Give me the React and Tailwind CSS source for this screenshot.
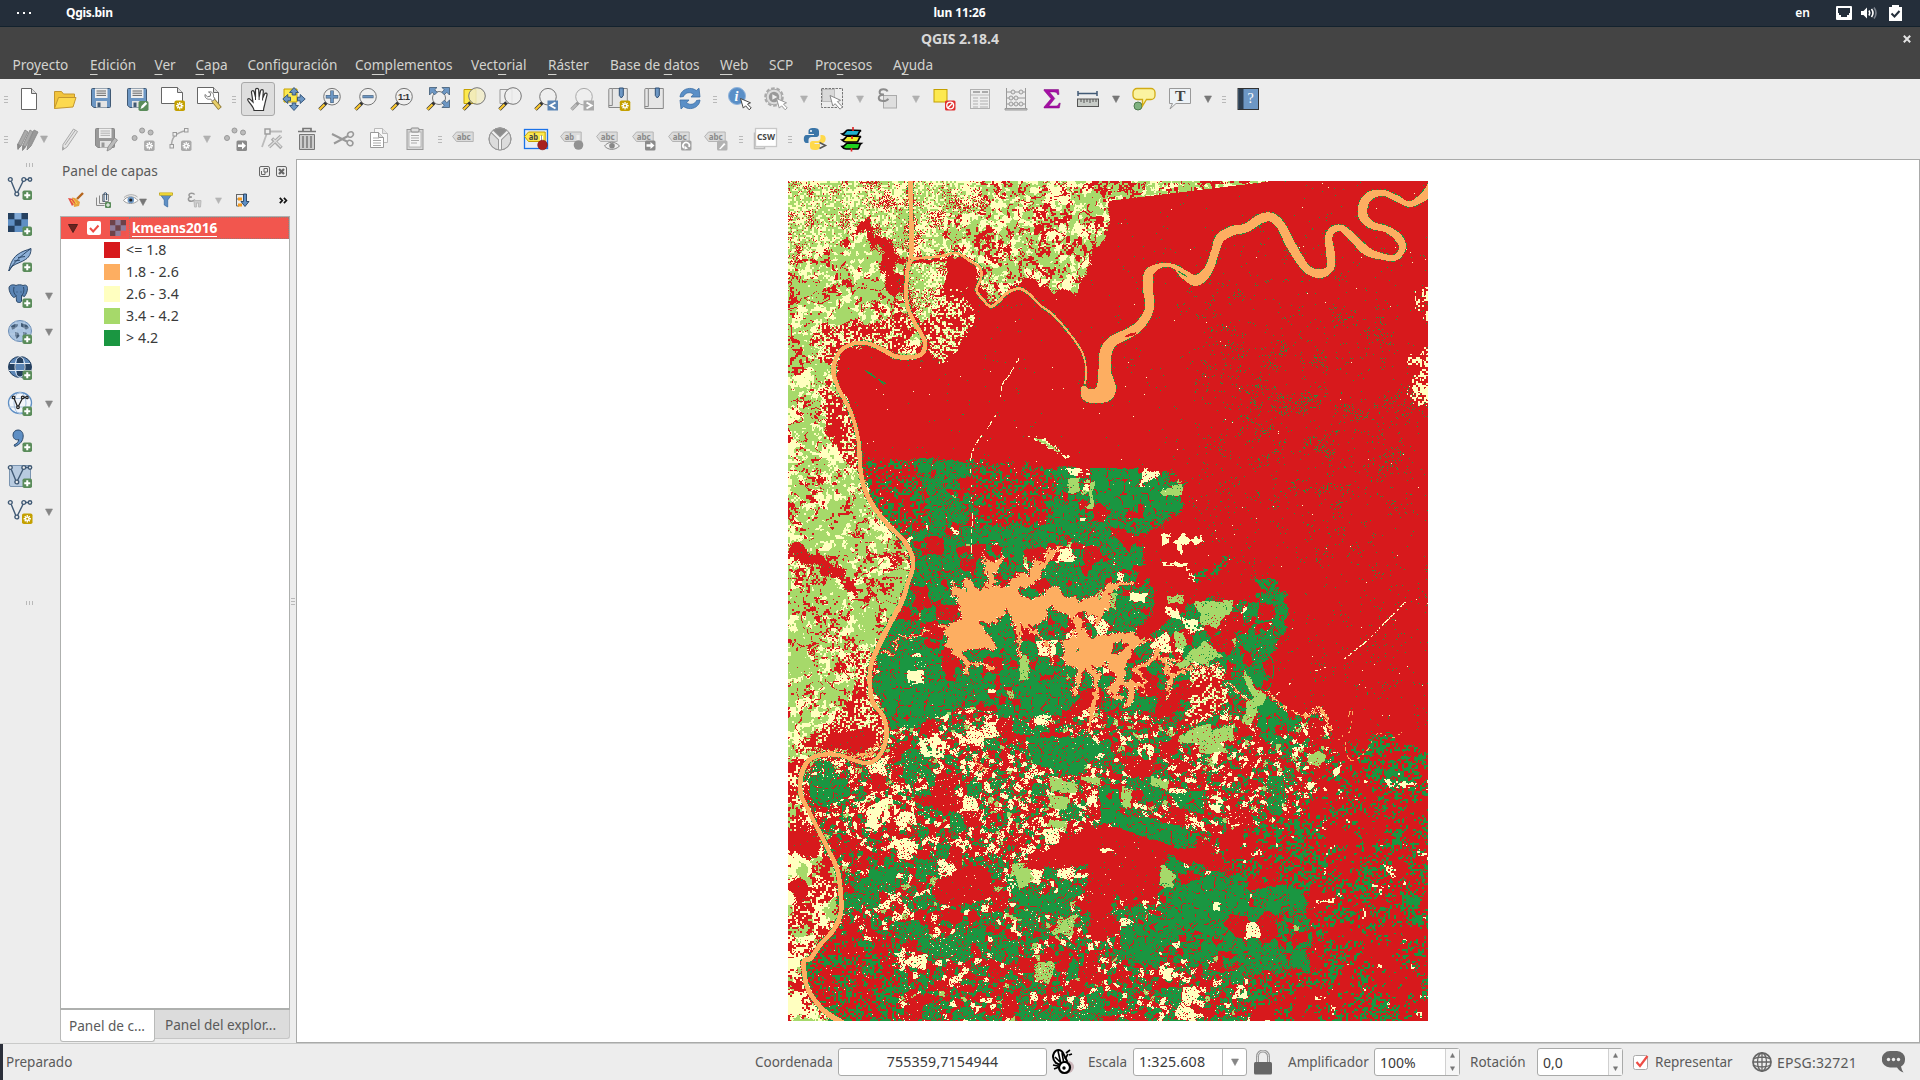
import React, { useEffect, useRef } from "react";

/* ---------------------------------------------------------------- raster */

const W = 640;
const H = 840;
const CLASSES = [
  [215, 25, 28],
  [253, 174, 97],
  [255, 255, 192],
  [166, 217, 106],
  [26, 150, 65],
];
const [RED, ORANGE, YELLOW, LIME, GREEN] = [0, 1, 2, 3, 4];

function hash(x, y, s) {
  let h = Math.imul(x | 0, 374761393) ^ Math.imul(y | 0, 668265263) ^ Math.imul(s | 0, 2147483629);
  h = Math.imul(h ^ (h >>> 13), 1274126177);
  h = Math.imul(h ^ (h >>> 15), 2246822519);
  return ((h ^ (h >>> 16)) >>> 0) / 4294967296;
}

function noise(x, y, scale, s) {
  const fx = x / scale;
  const fy = y / scale;
  const ix = Math.floor(fx);
  const iy = Math.floor(fy);
  let u = fx - ix;
  let v = fy - iy;
  u = u * u * (3 - 2 * u);
  v = v * v * (3 - 2 * v);
  const a = hash(ix, iy, s);
  const b = hash(ix + 1, iy, s);
  const c = hash(ix, iy + 1, s);
  const d = hash(ix + 1, iy + 1, s);
  return (a * (1 - u) + b * u) * (1 - v) + (c * (1 - u) + d * u) * v;
}

/* Jittered parcels; returns a per-parcel seed and the distance to the parcel's edge. */
function parcel(x, y, size, angle, s) {
  const ca = Math.cos(angle);
  const sa = Math.sin(angle);
  const u = (x * ca + y * sa) / size;
  const v = (y * ca - x * sa) / size;
  const iu = Math.floor(u);
  const iv = Math.floor(v);
  let best = 9;
  let second = 9;
  let id = 0;
  for (let j = -1; j <= 1; j++) {
    for (let i = -1; i <= 1; i++) {
      const px = iu + i + 0.1 + 0.8 * hash(iu + i, iv + j, s);
      const py = iv + j + 0.1 + 0.8 * hash(iu + i, iv + j, s + 1);
      const d = Math.max(Math.abs(u - px), Math.abs(v - py));
      if (d < best) {
        second = best;
        best = d;
        id = (iu + i) * 7919 + (iv + j) * 104729;
      } else if (d < second) second = d;
    }
  }
  return [id, (second - best) * size];
}

/* Shapes are digitised at three units per raster cell, from a (24, 18) origin. */
function pts(text, dx = 0, dy = 0) {
  return text
    .trim()
    .split(/\s+/)
    .map((p) => {
      const [x, y, w] = p.split(",").map(Number);
      return [(x + dx - 24) / 3, (y + dy - 18) / 3, (w || 0) / 3];
    });
}
const nw = (t) => pts(t);
const ne = (t) => pts(t, 960, 0);
const sw = (t) => pts(t, 0, 1275);
const se = (t) => pts(t, 960, 1275);

function fill(grid, poly, value) {
  for (let y = 0; y < H; y++) {
    const cy = y + 0.5;
    const xs = [];
    for (let i = 0; i < poly.length; i++) {
      const a = poly[i];
      const b = poly[(i + 1) % poly.length];
      if (a[1] <= cy !== b[1] <= cy) xs.push(a[0] + ((cy - a[1]) / (b[1] - a[1])) * (b[0] - a[0]));
    }
    xs.sort((p, q) => p - q);
    for (let k = 0; k + 1 < xs.length; k += 2) {
      const from = Math.max(0, Math.ceil(xs[k] - 0.5));
      const to = Math.min(W - 1, Math.floor(xs[k + 1] - 0.5));
      for (let x = from; x <= to; x++) grid[y * W + x] = value;
    }
  }
}

function stamp(grid, cx, cy, r, paint) {
  for (let y = Math.max(0, Math.floor(cy - r)); y <= Math.min(H - 1, Math.ceil(cy + r)); y++)
    for (let x = Math.max(0, Math.floor(cx - r)); x <= Math.min(W - 1, Math.ceil(cx + r)); x++)
      if ((x + 0.5 - cx) ** 2 + (y + 0.5 - cy) ** 2 <= r * r) paint(y * W + x, x, y);
}

function along(line, visit) {
  for (let i = 0; i < line.length - 1; i++) {
    const p0 = line[Math.max(0, i - 1)];
    const p1 = line[i];
    const p2 = line[i + 1];
    const p3 = line[Math.min(line.length - 1, i + 2)];
    const n = Math.ceil(Math.hypot(p2[0] - p1[0], p2[1] - p1[1]) * 2) + 1;
    for (let k = 0; k <= n; k++) {
      const t = k / n;
      const at = (c) =>
        0.5 *
        (2 * p1[c] +
          (p2[c] - p0[c]) * t +
          (2 * p0[c] - 5 * p1[c] + 4 * p2[c] - p3[c]) * t * t +
          (3 * p1[c] - p0[c] - 3 * p2[c] + p3[c]) * t * t * t);
      visit(at(0), at(1), at(2) / 2);
    }
  }
}

function river(grid, line, bank) {
  if (bank > 0)
    along(line, (x, y, r) =>
      stamp(grid, x, y, r + 1, (i, px, py) => {
        if (hash(px, py, 91) < bank) grid[i] = GREEN;
      })
    );
  along(line, (x, y, r) => stamp(grid, x, y, Math.max(r, 0.6), (i) => (grid[i] = ORANGE)));
}

const PALE = 1;
const PASTURE = 2;
const SPECKLE = 3;
const BARE = 4;
const NORTH_FARM = 5;
const MIXED_FARM = 6;
const SOUTH_FARM = 7;
const GREEN_FARM = 8;
const EAST_FRINGE = 9;
const THICKET = 10;
const NORTH_PASTURE = 11;
const YELLOW_MIX = 12;
const EAST_FARM = 13;

const ZONES = [
  [PASTURE, nw("0,0 390,0 395,240 380,300 380,370 392,420 432,500 405,545 350,545 270,507 190,520 160,590 225,750 240,870 275,985 370,1095 398,1180 360,1290 290,1425 270,1530 310,1620 320,1675 285,1755 130,1739 62,1800 62,1855 115,1965 172,2085 182,2215 70,2355 80,2445 180,2540 0,2540")],
  [PALE, nw("0,0 390,0 392,225 350,215 285,150 240,150 150,215 90,215 40,260 0,250")],
  [NORTH_PASTURE, nw("398,0 990,0 1530,12 985,78 985,180 945,215 930,270 885,350 820,345 780,330 740,300 690,340 650,372 625,370 605,330 605,280 540,235 400,245")],
  [PALE, nw("398,0 600,0 620,80 560,120 500,120 470,200 400,235")],
  [PALE, nw("400,262 505,258 510,300 470,340 450,430 415,430 388,380 386,300")],
  [SPECKLE, nw("470,330 545,335 560,380 590,420 555,490 485,572 440,500 415,440 450,420")],
  [SPECKLE, nw("120,450 300,450 360,400 400,470 350,540 270,505 190,520 160,570 110,560 100,500")],
  [SPECKLE, nw("120,640 175,660 225,750 240,880 230,900 190,850 140,780")],
  [BARE, nw("235,145 275,122 288,172 340,215 350,280 378,312 375,380 335,345 310,300 300,240 240,175")],
  [BARE, nw("30,1110 60,1098 115,1150 200,1190 205,1220 235,1240 230,1275 190,1250 195,1232 120,1185 90,1175 40,1150")],
  [SPECKLE, sw("200,130 285,150 268,260 310,350 318,430 285,455 120,440 60,460 40,440 130,380 190,340 230,250")],
  [BARE, sw("150,400 270,390 290,440 230,465 130,445")],
  [YELLOW_MIX, sw("0,460 90,470 62,560 62,590 115,690 172,810 182,940 70,1075 75,1140 180,1275 0,1275")],
  [BARE, sw("24,690 110,680 125,730 100,775 50,770 24,740")],
  [BARE, sw("30,820 75,830 95,880 60,920 30,860")],
  [NORTH_FARM, nw("255,850 560,855 870,880 1150,888 1210,925 1205,1010 1140,1050 1095,1100 1100,1220 1120,1290 990,1500 870,1640 700,1640 520,1600 330,1650 280,1540 290,1425 365,1290 398,1180 370,1095 275,985 250,900")],
  [THICKET, nw("255,850 420,855 440,1060 420,1080 360,1090 280,985 250,900")],
  [THICKET, nw("575,865 830,880 800,1050 650,1050 600,1060 575,980")],
  [MIXED_FARM, sw("325,370 520,325 700,345 850,350 990,300 1290,380 1330,480 1280,700 960,670 740,780 620,800 400,770 180,790 110,680 62,590 62,530 130,470 280,490 320,420")],
  [SOUTH_FARM, sw("110,690 200,700 400,780 720,780 960,780 1140,830 1130,1290 180,1290 80,1170 75,1090 182,940 180,820")],
  [THICKET, sw("75,1090 200,980 350,1060 360,1263 180,1263 90,1180")],
  [SOUTH_FARM, sw("350,960 560,900 720,920 900,1000 960,1263 380,1263")],
  [NORTH_FARM, se("0,230 150,100 300,0 560,0 555,80 500,180 500,270 600,360 560,430 380,360 260,380 0,330")],
  [EAST_FARM, se("0,330 220,350 420,330 570,400 640,330 690,350 700,500 680,620 560,680 480,720 300,760 280,620 0,600")],
  [SOUTH_FARM, se("0,400 230,380 300,640 0,650")],
  [EAST_FRINGE, se("690,470 830,390 1000,470 1000,1275 640,1275 640,900 540,820 430,700 560,660 640,600")],
  [GREEN_FARM, se("180,770 400,820 600,860 630,960 630,1110 440,1130 440,1263 220,1263 150,1120 60,1110 80,980 175,960")],
  [SOUTH_FARM, se("0,1090 440,1100 440,1263 0,1263")],
  [EAST_FRINGE, se("350,700 560,660 600,850 400,830")],
  [EAST_FRINGE, se("440,1130 640,1110 640,1263 440,1263")],
  [NORTH_FARM, ne("465,1207 540,1215 562,1290 562,1330 530,1420 420,1420 430,1275 495,1262")],
  [THICKET, ne("275,1195 390,1130 380,1165 300,1230")],
  [BARE, sw("485,830 620,790 640,880 600,905 480,920 460,890")],
  [BARE, sw("930,790 990,780 1140,830 1135,905 1090,905 990,890 985,1020 930,1030 915,900")],
  [BARE, sw("740,775 960,780 940,800 860,810 740,800")],
  [BARE, se("0,690 180,740 200,770 175,850 175,900 0,880")],
  [BARE, sw("190,960 240,960 260,1010 200,1010")],
];

/* red, green, yellow and lime shares; share of large parcels; grain; small parcel size */
const FARMS = {
  [NORTH_FARM]: [0.25, 0.7, 0.03, 0.02, 0.6, 0.09, 6.5],
  [MIXED_FARM]: [0.38, 0.34, 0.24, 0.04, 0.2, 0.14, 4.6],
  [SOUTH_FARM]: [0.34, 0.5, 0.13, 0.03, 0.33, 0.12, 5.4],
  [GREEN_FARM]: [0.15, 0.82, 0.02, 0.01, 0.65, 0.08, 6],
  [EAST_FARM]: [0.46, 0.33, 0.17, 0.04, 0.1, 0.14, 4.4],
};

const FIELDS = [
  [GREEN, nw("410,852 455,853 450,895 415,897")],
  [GREEN, nw("475,855 550,858 548,890 500,885 470,905")],
  [GREEN, nw("810,1020 865,980 905,1040 860,1075")],
  [GREEN, nw("930,880 1075,883 1075,1010 985,1005 945,975")],
  [GREEN, ne("130,925 180,900 215,940 245,965 245,1005 215,1015 130,990")],
  [GREEN, nw("685,1075 730,1080 730,1190 685,1200")],
  [GREEN, nw("600,1080 830,1045 855,1080 690,1085 640,1110")],
  [LIME, nw("865,910 897,910 897,953 865,953")],
  [YELLOW, nw("858,880 928,880 925,903 870,900")],
  [LIME, nw("930,917 942,917 938,1000 910,1000 930,990")],
  [LIME, ne("215,927 250,929 250,964 185,960 181,942 215,942")],
  [YELLOW, nw("742,783 795,790 868,845 860,850 800,815")],
  [LIME, nw("760,788 795,795 850,838 800,812")],
  [YELLOW, ne("222,1100 250,1075 270,1095 240,1138")],
  [YELLOW, ne("185,1080 212,1075 205,1105 185,1118")],
  [YELLOW, ne("270,1095 300,1075 308,1100 285,1112")],
  [YELLOW, ne("185,1160 265,1165 262,1175 190,1175")],
  [YELLOW, ne("255,1175 275,1190 285,1220 265,1210")],
  [YELLOW, ne("85,1250 140,1255 138,1282 90,1275")],
  [LIME, ne("200,1265 250,1260 250,1285 200,1285")],
  [GREEN, ne("465,1207 540,1215 512,1250 490,1245")],
  [GREEN, sw("320,180 480,170 520,330 720,340 720,250 850,230 845,350 700,345 530,330 400,380 330,380 300,260")],
  [GREEN, sw("600,60 640,100 680,40 700,60 710,170 590,170 560,150")],
  [GREEN, sw("740,410 935,410 960,450 900,530 760,490")],
  [RED, sw("780,395 840,395 840,412 780,412")],
  [GREEN, sw("690,880 720,860 830,920 860,945 740,930")],
  [LIME, sw("700,800 750,810 760,840 720,868 705,835")],
  [YELLOW, sw("680,815 710,850 700,870 668,845")],
  [LIME, sw("680,940 722,955 718,965 678,950")],
  [LIME, sw("905,530 962,533 958,560 900,540")],
  [LIME, sw("810,530 895,550 888,580 812,572")],
  [LIME, sw("805,585 868,590 862,630 808,625")],
  [LIME, sw("805,660 862,665 862,690 800,680")],
  [YELLOW, sw("380,215 430,210 435,250 385,255")],
  [YELLOW, sw("415,430 470,400 500,430 490,475 430,470")],
  [YELLOW, sw("260,620 325,590 330,650 280,700 255,690")],
  [LIME, sw("720,170 745,168 748,238 720,242")],
  [YELLOW, sw("915,585 955,590 955,625 920,615")],
  [RED, sw("390,590 500,585 500,615 430,620")],
  [GREEN, sw("90,520 200,540 210,590 120,620 85,580")],
  [GREEN, sw("270,810 350,800 345,850 265,850")],
  [LIME, se("225,200 300,130 320,125 365,170 330,180 320,200 280,180 250,205")],
  [LIME, se("285,5 315,5 310,38 290,35")],
  [LIME, se("320,5 395,0 395,28 365,60 350,85 300,70 305,45")],
  [LIME, se("222,95 250,95 260,130 240,152 225,140")],
  [YELLOW, se("195,15 235,30 240,60 200,40")],
  [YELLOW, se("245,55 300,60 310,85 260,105")],
  [LIME, se("425,230 445,228 470,265 505,285 480,320 465,345 450,375 428,372 440,310 460,290")],
  [GREEN, se("270,380 360,345 350,375 310,372 300,400 270,400")],
  [LIME, se("235,410 305,372 333,372 335,390 405,370 400,420 360,430 385,460 300,460 290,425 240,430")],
  [YELLOW, se("340,455 355,455 360,510 335,520")],
  [GREEN, se("470,320 520,300 530,400 570,430 500,430 475,380")],
  [GREEN, se("0,560 60,580 60,650 0,640")],
  [GREEN, se("0,640 160,655 290,700 285,745 240,745 0,665")],
  [GREEN, se("210,580 320,570 300,640 240,625")],
  [YELLOW, se("325,600 350,585 372,605 350,635 325,625")],
  [LIME, se("155,530 205,545 200,570 150,550")],
  [LIME, se("65,560 95,570 92,625 65,610")],
  [LIME, se("185,790 225,825 215,863 178,858")],
  [GREEN, se("230,860 370,820 380,900 340,1010 200,960 210,920")],
  [GREEN, se("400,835 450,870 440,950 380,940")],
  [GREEN, se("470,870 560,850 600,870 590,910 500,930")],
  [GREEN, se("60,975 110,975 150,1000 150,1080 60,1060")],
  [YELLOW, se("340,908 362,905 362,930 340,928")],
  [YELLOW, se("408,1160 442,1160 442,1198 408,1198")],
  [YELLOW, se("190,1105 220,1105 215,1140 190,1140")],
  [YELLOW, se("0,745 38,748 38,754 0,756")],
  [YELLOW, se("845,790 890,810 885,832 860,820")],
  [YELLOW, se("850,535 880,545 950,550 948,565 870,562")],
  [YELLOW, se("695,515 725,490 722,520 700,530")],
  [LIME, se("625,465 655,450 680,470 660,500 625,490")],
  [LIME, sw("30,150 110,190 110,220 24,235")],
  [LIME, sw("60,780 85,800 85,850 60,830")],
  [YELLOW, sw("24,760 60,790 50,830 24,850")],
  [YELLOW, sw("24,1170 80,1180 110,1240 24,1250")],
];

const SPARSE = [[SPECKLE, se("272,210 370,205 375,330 310,350 265,375")]];

const LAKE = [
  nw("508,1216 525,1235 560,1252 558,1208 572,1225 600,1245 620,1240 625,1200 603,1146 640,1165 674,1143 668,1165 645,1190 642,1235 665,1248 690,1215 720,1195 748,1205 770,1150 775,1165 800,1147 805,1128 845,1112 815,1150 788,1180 765,1222 715,1245 722,1272 790,1258 835,1228 850,1268 895,1262 892,1278 960,1272 990,1225 990,1300 960,1320 900,1310 880,1330 905,1360 930,1385 915,1400 880,1330 800,1290 790,1330 770,1352 720,1335 700,1320 680,1300 660,1325 640,1345 600,1335 620,1370 650,1425 590,1425 545,1425 540,1450 512,1418 485,1360 520,1338 545,1335 540,1290 520,1255"),
  sw("850,120 885,112 930,115 985,112 1010,100 1055,98 1058,112 1095,128 1052,150 1040,190 1020,228 970,205 938,190 900,198 850,195 855,160"),
  ne("0,1260 25,1232 95,1220 98,1230 60,1238 35,1250 20,1290 0,1300"),
  ne("-60,1275 20,1270 22,1315 -20,1320 -60,1300"),
];

const ISLANDS = [
  nw("722,1262 770,1255 778,1266 750,1275"),
  se("35,130 65,120 85,130 70,145 55,165 35,160"),
  se("0,190 25,195 30,225 5,240 -10,215"),
  sw("630,1275 632,1276 631,1277"),
  sw("890,148 897,148 897,156 890,156"),
  sw("850,45 895,75 880,105 850,110 830,90"),
  sw("930,60 970,75 975,105 930,100"),
];

const LAKE_ARMS = [
  sw("708,40,22 716,90,8 717,165,4"),
  sw("720,60,20 760,95,8 800,135,5 812,190,3"),
  sw("800,20,12 795,60,6"),
  sw("890,60,20 905,130,34"),
  sw("905,190,30 895,240,12 880,290,6"),
  sw("925,200,30 948,240,18 945,300,12 930,350,10 928,398,5"),
  sw("510,130,20 555,180,12 600,195,5 640,200,2"),
  sw("560,190,10 565,225,3"),
  sw("350,105,3 400,115,3 450,85,3"),
  sw("300,158,3 340,160,3 352,120,3"),
  sw("130,452,5 210,468,5 270,462,5 300,430,5"),
  sw("585,475,6 615,512,6"),
  se("10,120,34 60,110,20 95,110,14 120,125,6 148,124,3"),
  se("20,130,26 40,170,30 60,220,30 45,270,30"),
  se("65,190,22 55,260,24 25,268,14 60,290,14"),
  se("55,250,14 90,262,20 85,310,12 75,320,6"),
  se("95,250,14 130,262,8 138,285,3"),
  se("108,210,10 130,190,12 155,185,10 175,150,14 185,180,10 215,185,8 240,175,3"),
  se("110,205,12 130,235,8 135,262,8"),
  se("190,175,8 210,225,12 250,215,8 290,200,5 330,208,3 355,190,3"),
  se("215,230,10 208,270,6 200,295,3"),
  se("365,250,3 400,252,3 420,285,3 450,300,2"),
  se("500,270,2 550,320,2 620,345,2 660,325,2 690,385,2"),
  se("0,0,12 8,30,14 0,60,20"),
];

const WEST_RIVER = [
  ...nw("392,10,14 393,120,14 395,200,14 392,250,14 382,290,12 379,370,12 392,420,12 420,470,12 434,500,13 430,530,14 405,545,13 350,545,14 310,525,14 270,507,12 230,504,12 190,520,12 168,550,12 160,590,14 175,640,12 205,695,12 225,750,12 237,810,12 240,870,13 250,930,14 275,985,14 320,1045,14 370,1095,14 395,1140,14 398,1180,13 385,1220,13"),
  ...sw("365,5,15 325,80,15 290,150,15 272,200,14 270,260,14 280,310,14 310,350,13 320,400,14 308,450,13 285,480,13 260,490,13 220,480,12 180,466,12 130,464,13 90,478,14 65,520,14 62,580,14 85,630,13 115,690,13 145,750,13 172,810,14 182,880,14 182,940,14 160,990,14 120,1035,14 92,1075,14 72,1082,14 72,1110,14 85,1170,14 130,1230,15 185,1268,18"),
];
const BRANCH = nw("396,250,9 440,248,8 490,242,8 530,234,8 570,258,8 600,278,8 603,310,8 590,345,8 610,375,8 632,394,9 655,380,9 680,355,9 715,341,9 745,355,8 780,390,7 820,420,7 860,465,6 900,520,6 915,560,5 918,600,5 915,625,6");
const EAST_RIVER = ne("1000,30,34 975,62,26 930,87,17 890,70,18 850,54,18 810,62,25 790,90,28 790,125,28 815,150,22 860,163,20 895,188,24 907,220,20 885,248,18 840,243,20 800,228,26 760,190,24 725,160,20 698,165,20 686,190,22 692,240,26 690,280,22 660,296,26 625,285,24 600,255,26 570,205,28 545,155,26 515,127,26 480,132,28 440,158,26 395,168,28 360,190,28 345,230,24 325,285,26 290,316,32 255,300,26 225,276,14 190,270,12 150,290,26 143,330,30 148,400,26 120,450,28 85,475,30 40,498,32 18,530,36 14,590,38 18,645,58 -10,662,44 -38,660,36 -48,640,16");

function farmClass(x, y, zone) {
  const [r, g, ye, , big, grain, small] = FARMS[zone];
  if (hash(x, y, 40) < grain) {
    const k = hash(x, y, 41) * 1.1;
    return k < 0.6 ? RED : k < 0.6 + g * 0.4 ? GREEN : k < 0.6 + g * 0.4 + ye ? YELLOW : RED;
  }
  const wx = x + 4 * noise(x, y, 8, 21);
  const wy = y + 4 * noise(x, y, 8, 22);
  let [id, edge] = parcel(wx, wy, 16, 0.05, 5);
  if (hash(id, 1, 7) >= big) [id, edge] = parcel(wx, wy, small, 0.12, 15);
  if (edge < 0.8 && hash(x >> 1, y >> 1, 8) < 0.5) return RED;
  const k = hash(id, 3, 9);
  if (k < r) return RED;
  if (k < r + g) return GREEN;
  if (k < r + g + ye) return YELLOW;
  return LIME;
}

function classify(x, y, zone) {
  const grain = hash(x, y, 1);
  const grain2 = hash(x >> 1, y >> 1, 2);
  switch (zone) {
    case PALE: {
      const v = 0.45 * noise(x, y, 16, 3) + 0.55 * grain2;
      if (noise(x, y, 11, 4) * 0.6 + grain * 0.4 < 0.25 || (grain < 0.06 && grain2 < 0.7)) return RED;
      return v > 0.5 ? LIME : YELLOW;
    }
    case PASTURE:
    case NORTH_PASTURE: {
      const north = zone === NORTH_PASTURE;
      const wx = x + 9 * noise(x, y, 7, 31);
      const wy = y + 9 * noise(x, y, 7, 32);
      const vein = Math.abs(noise(wx, wy, 10, 5) - 0.5);
      if (vein < 0.035 && noise(x, y, 14, 33) > 0.42 && grain < 0.8) return RED;
      if (0.38 * noise(x, y, 10, 6) + 0.34 * noise(x, y, 4, 34) + 0.28 * grain2 < (north ? 0.39 : 0.335)) return RED;
      const v = 0.45 * noise(wx + wy * 0.5, wy, 12, 7) + 0.35 * noise(x, y, 4, 8) + 0.2 * grain2;
      return v > (north ? 0.47 : 0.45) ? LIME : YELLOW;
    }
    case SPECKLE: {
      const v = 0.45 * noise(x, y, 10, 9) + 0.55 * grain2;
      return v > 0.55 ? (grain < 0.25 ? LIME : YELLOW) : RED;
    }
    case YELLOW_MIX: {
      const v = 0.5 * noise(x, y, 13, 10) + 0.2 * noise(x, y, 4, 35) + 0.3 * grain2;
      if (v < 0.46) return RED;
      return noise(x, y, 10, 11) * 0.8 + grain2 * 0.2 > 0.6 ? LIME : YELLOW;
    }
    case BARE:
      return grain < 0.012 ? GREEN : grain > 0.997 ? YELLOW : RED;
    case THICKET: {
      const v = 0.32 * noise(x, y, 10, 12) + 0.23 * noise(x, y, 4, 36) + 0.45 * grain2;
      return v > 0.57 ? GREEN : grain > 0.99 ? YELLOW : RED;
    }
    case EAST_FRINGE: {
      const v = 0.34 * noise(x, y, 16, 13) + 0.3 * noise(x + y * 0.3, y, 4, 14) + 0.36 * grain2;
      const lean = y > 720 ? 0.035 : x < 520 ? 0.03 : 0;
      if (v > 0.575 + lean) return GREEN;
      return noise(x, y, 8, 15) > 0.88 && grain2 > 0.4 ? YELLOW : RED;
    }
    case 0: {
      const heart = Math.exp(-(((x - 530) / 100) ** 2) - ((y - 220) / 120) ** 2);
      const open = x > 400 && y > 60 ? 0.01 : 0.003;
      const cluster = noise(x, y, 9, 16) * noise(x, y, 22, 37);
      const d = (open + 0.05 * heart) * (cluster > 0.3 ? 2.2 : 0.3);
      if (x > 626 - 8 * (y > 160) && y > 105 && y < 225 && (y < 140 || y > 155))
        if (noise(x, y, 9, 18) * 0.55 + grain2 * 0.45 > 0.6) return YELLOW;
      if (hash(x, y, 17) < d) return GREEN;
      return grain > 0.9994 ? YELLOW : RED;
    }
    default:
      return farmClass(x, y, zone);
  }
}

function buildRaster() {
  const zones = new Uint8Array(W * H);
  ZONES.forEach(([zone, poly]) => fill(zones, poly, zone));
  SPARSE.forEach(([zone, poly]) => fill(zones, poly, zone));
  const grid = new Uint8Array(W * H);
  for (let y = 0; y < H; y++) {
    for (let x = 0; x < W; x++) {
      const sharp = y < 32 && x > 320;
      const ox = sharp ? 0 : Math.round(10 * (noise(x, y, 7, 51) - 0.5) + 3 * (hash(x, y, 53) - 0.5));
      const oy = sharp ? 0 : Math.round(10 * (noise(x, y, 7, 52) - 0.5) + 3 * (hash(x, y, 54) - 0.5));
      const sx = Math.min(W - 1, Math.max(0, x + ox));
      const sy = Math.min(H - 1, Math.max(0, y + oy));
      grid[y * W + x] = classify(x, y, zones[sy * W + sx]);
    }
  }

  const parcels = new Uint8Array(W * H);
  FIELDS.forEach(([cls, poly]) => fill(parcels, poly, cls + 1));
  for (let y = 0; y < H; y++)
    for (let x = 0; x < W; x++) {
      const sx = Math.min(W - 1, Math.max(0, x + Math.round(3 * (noise(x, y, 4, 55) - 0.5))));
      const sy = Math.min(H - 1, Math.max(0, y + Math.round(3 * (noise(x, y, 4, 56) - 0.5))));
      const cls = parcels[sy * W + sx];
      if (!cls) continue;
      const [, edge] = parcel(x + 3 * noise(x, y, 9, 21), y, 15, 0.08, 25);
      const rough = noise(x, y, 5, 57) * 0.6 + hash(x >> 1, y >> 1, 58) * 0.4;
      if (edge < 0.8 && hash(x >> 1, y >> 1, 26) < 0.5) grid[y * W + x] = cls - 1 === GREEN ? RED : cls - 1;
      else if (cls - 1 === YELLOW ? rough > 0.36 : hash(x, y, 27) > 0.05) grid[y * W + x] = cls - 1;
    }

  const basin = new Uint8Array(W * H);
  LAKE.forEach((poly) => fill(basin, poly, 1));
  LAKE_ARMS.forEach((line) => along(line, (x, y, r) => stamp(basin, x, y, Math.max(r, 0.7), (i) => (basin[i] = 1))));
  ISLANDS.forEach((poly) => fill(basin, poly, 0));
  const water = new Uint8Array(W * H);
  for (let y = 0; y < H; y++)
    for (let x = 0; x < W; x++) {
      const sx = Math.min(W - 1, Math.max(0, x + Math.round(6 * (noise(x, y, 4, 62) - 0.5))));
      const sy = Math.min(H - 1, Math.max(0, y + Math.round(6 * (noise(x, y, 4, 63) - 0.5))));
      water[y * W + x] = basin[sy * W + sx];
    }
  for (let y = 2; y < H - 2; y++)
    for (let x = 2; x < W - 2; x++) {
      const i = y * W + x;
      if (water[i]) grid[i] = ORANGE;
      else if ((water[i - 1] || water[i + 1] || water[i - W] || water[i + W] || water[i + 2]) && hash(x, y, 60) < 0.7)
        grid[i] = hash(x, y, 61) < 0.3 ? YELLOW : RED;
    }

  const trail = (line, cls, p) =>
    along(line, (x, y) => {
      const px = Math.round(x);
      const py = Math.round(y);
      if (px >= 0 && px < W && py >= 0 && py < H && hash(px >> 1, py >> 1, 70) < p) grid[py * W + px] = cls;
    });
  trail(nw("715,550 685,600 665,630 660,690"), YELLOW, 0.45);
  trail(nw("645,720 620,760 590,800 570,860 575,1000 572,1140"), YELLOW, 0.4);
  trail(se("915,5 860,60 800,120 725,180"), YELLOW, 0.5);
  trail(se("720,185 600,230 520,290"), YELLOW, 0.1);
  trail(se("660,405 720,415 750,330 755,360 735,440 755,480 800,450 830,400 880,410 925,380"), ORANGE, 0.35);
  trail(se("455,240 500,270 520,200 495,150 450,120"), GREEN, 0.8);
  trail(nw("255,585 275,600 315,625"), GREEN, 0.9);
  trail(nw("265,590 285,603 310,628"), GREEN, 0.7);

  river(grid, WEST_RIVER, 0.3);
  river(grid, BRANCH, 0.3);
  river(grid, EAST_RIVER, 0.4);
  fill(grid, ne("70,487 90,475 108,472 105,480 85,485"), RED);
  trail(ne("235,288 258,303"), GREEN, 1);
  return grid;
}

function RasterLayer() {
  const ref = useRef(null);
  useEffect(() => {
    const ctx = ref.current.getContext("2d");
    const image = ctx.createImageData(W, H);
    const grid = buildRaster();
    for (let i = 0; i < grid.length; i++) {
      const c = CLASSES[grid[i]];
      image.data[i * 4] = c[0];
      image.data[i * 4 + 1] = c[1];
      image.data[i * 4 + 2] = c[2];
      image.data[i * 4 + 3] = 255;
    }
    ctx.putImageData(image, 0, 0);
  }, []);
  return <canvas ref={ref} width={W} height={H} className="block h-[840px] w-[640px]" />;
}

/* ----------------------------------------------------------------- icons */

const Svg = ({ children, size = 24, className = "" }) => (
  <svg width={size} height={size} viewBox="0 0 24 24" fill="none" className={"block shrink-0 overflow-visible " + className}>
    {children}
  </svg>
);

const Plus = () => (
  <g>
    <rect x="14.5" y="14.5" width="9.5" height="9.5" rx="1.8" fill="#5a8c5a" />
    <path d="M19.25 16.3v6M16.25 19.3h6" stroke="#fff" strokeWidth="2" />
  </g>
);
const Star = ({ x = 13.5, y = 13.5, fill = "#c4a000" }) => (
  <g transform={`translate(${x} ${y})`}>
    <rect width="10.5" height="10.5" rx="1.8" fill={fill} />
    <path d="M5.25 1.6v7.3M1.6 5.25h7.3M2.7 2.7l5.1 5.1M7.8 2.7L2.7 7.8" stroke="#fff" strokeWidth="1.3" />
    <circle cx="5.25" cy="5.25" r="1.1" fill={fill} />
  </g>
);
const Cursor = ({ fill = "#fff", stroke = "#444" }) => (
  <path d="M12.5 11.5l2.8 9.6 2.3-2.3 3.6 4 2-1.9-3.7-3.8 3-1.3z" fill={fill} stroke={stroke} strokeWidth="1" />
);
const Lens = ({ grey, cx = 14, cy = 9.7, r = 8.3, fill = "#eee" }) => (
  <g>
    <path d="M1.5 22.5l7-7" stroke={grey ? "#999" : "#333"} strokeWidth="3.4" />
    <path d="M1.5 22.5l5-5" stroke={grey ? "#bbb" : "#fcc92f"} strokeWidth="2.2" />
    <circle cx={cx} cy={cy} r={r} fill={fill} fillOpacity=".85" stroke={grey ? "#aaa" : "#777"} strokeWidth="1" />
  </g>
);
const Disk = ({ grey, x = 2 }) => (
  <g transform={`translate(${x} 0)`}>
    <path d="M1.5 1.5h17a1 1 0 011 1v17a1 1 0 01-1 1H3l-2.5-2V2.500a1 1 0 011-1z" fill={grey ? "#999" : "#6d97c4"} stroke={grey ? "#888" : "#415a75"} />
    <rect x="4" y="1.500" width="12.500" height="9.500" fill="#eee" />
    <path d="M5.500 4h9.500M5.500 6.200h9.500M5.500 8.400h9.500" stroke={grey ? "#aaa" : "#555"} strokeWidth=".9" />
    <path d="M5 14h11v6.500H5z" fill="#e4e4e4" />
    <rect x="6.500" y="15.500" width="3" height="4.500" fill={grey ? "#999" : "#415a75"} />
  </g>
);
const Tag = ({ children, yellow, text = "abc" }) => (
  <g>
    <path d="M.6 9.500L4.500 5h16.700v9.500H4.500z" fill={yellow ? "#fce94f" : "#dcdcdc"} stroke={yellow ? "#c4a000" : "#b4b4b4"} />
    <text x="4.700" y="12.600" fontSize="8.500" fontWeight="700" fontFamily="'Noto Sans',sans-serif" fill={yellow ? "#444" : "#8a8a8a"} textLength={text.length * 4.700} lengthAdjust="spacingAndGlyphs">
      {text}
    </text>
    {children}
  </g>
);
const Vee = ({ dx = 0, dy = 0, color = "#415a75", thin = 1.4 }) => (
  <g transform={`translate(${dx} ${dy})`} stroke={color} strokeWidth={thin}>
    <path d="M3.200 5.300L8 17M9.500 16.500l5.700-11.500M17.500 3.500h3" />
    <g fill="#eee">
      <circle cx="2.300" cy="3.500" r="1.900" />
      <circle cx="15.800" cy="3.500" r="1.900" />
      <circle cx="22" cy="3.500" r="1.700" />
      <circle cx="8.800" cy="18" r="1.900" />
    </g>
  </g>
);
const Page = ({ w = 16, h = 22, x = 4, y = 1, s = "#666" }) => (
  <g stroke={s}>
    <path d={`M${x + 0.5} ${y + 0.5}h${w - 6}l5 5v${h - 6}h-${w - 1}z`} fill="#fff" />
    <path d={`M${x + w - 5.5} ${y + 0.5}v5h5`} fill="#ddd" />
  </g>
);

const I = {
  newDoc: <Page />,
  open: (
    <g stroke="#c4972f">
      <path d="M1.500 21.500V4.500h7l2 2.500h11v4" fill="#f2c43c" />
      <path d="M1.500 21.500L5.500 10.500h17.500l-3 9.500z" fill="#fcd94f" />
    </g>
  ),
  save: <Disk />,
  saveAs: (
    <g>
      <Disk />
      <rect x="13.500" y="14" width="10" height="10" rx="1.800" fill="#5a8c5a" />
      <path d="M15.500 22l1-3 4-4 1.700 1.700-4 4z" fill="#fff" />
    </g>
  ),
  composer: (
    <g>
      <Page x={0} y={0} w={22} h={17} />
      <Star />
    </g>
  ),
  manager: (
    <g>
      <Page x={0} y={0} w={22} h={17} />
      <path d="M16 13l7 8.500" stroke="#8f7a35" strokeWidth="4.500" />
      <path d="M16 13l6.500 8" stroke="#e8cf6a" strokeWidth="2.800" />
      <path d="M8 7.500l2.500 2.300 2.700-.6.500-2.700L11.500 5c3-.8 5.500 1.200 5 4.500l1.500 2.500-2.500 2-2-2C10.500 13 7.500 11 8 7.500z" fill="#fff" stroke="#777" />
    </g>
  ),
  hand: (
    <g>
      <path
        d="M8 23.500c0-3-3.500-6-6-10-.8-1.500.8-2.600 2.200-1.200L7 15 5.500 5.500C5.200 3.500 7.600 3 8.200 5L9.500 10V3c0-2.200 3-2.200 3.200 0l.4 7L14.500 4c.5-2 3-1.600 2.800.4L16.800 11l1.700-4c.8-1.600 2.900-.9 2.500.8L19 16c-.4 3-1.500 4.500-1.500 7.500z"
        fill="#fff"
        stroke="#333"
        strokeWidth="1.200"
      />
      <path d="M9.500 10v3M13.100 10v3M16.600 11v2.500" stroke="#333" />
    </g>
  ),
  panSel: (
    <g>
      <path d="M2 2h13v13H2z" fill="#fce94f" stroke="#c4a000" />
      <g fill="#6d97c4" stroke="#2f4f75" strokeWidth=".9">
        <path d="M12 .5l4.500 5h-2.700V8h-3.600V5.500H7.500z" />
        <path d="M12 23.500l4.500-5h-2.700V16h-3.600v2.500H7.500z" />
        <path d="M.8 12l5-4.500v2.700h2.700v3.600H5.800v2.700z" />
        <path d="M23.200 12l-5-4.500v2.700h-2.700v3.600h2.700v2.700z" />
      </g>
    </g>
  ),
  zoomIn: (
    <g>
      <Lens />
      <path d="M14 3.500v12.400M7.800 9.700h12.400" stroke="#415a75" strokeWidth="3.400" />
      <path d="M14 4v11.400M8.300 9.700h11.400" stroke="#6d97c4" strokeWidth="2.200" />
    </g>
  ),
  zoomOut: (
    <g>
      <Lens />
      <path d="M8.500 9.700h11" stroke="#415a75" strokeWidth="3" />
      <path d="M9 9.700h10" stroke="#6d97c4" strokeWidth="1.800" />
    </g>
  ),
  zoomOne: (
    <g>
      <Lens />
      <text x="8" y="13" fontSize="9.500" fontWeight="700" fontFamily="'Liberation Sans',Arial,sans-serif" fill="#333" textLength="12">
        1:1
      </text>
    </g>
  ),
  zoomFull: (
    <g>
      <Lens cx={13} cy={11} r={6.5} />
      <g fill="#6d97c4" stroke="#415a75" strokeWidth=".8">
        <path d="M3.500.5H11L8.700 2.800l2.500 2.500-2.500 2.500-2.500-2.500L3.500 8z" />
        <path d="M23.500.5H16l2.300 2.300-2.500 2.500 2.500 2.500 2.500-2.500L23.500 8z" />
        <path d="M23.500 20.500H16l2.300-2.300-2.500-2.500 2.500-2.500 2.500 2.500 2.700-2.700z" />
      </g>
    </g>
  ),
  zoomSel: (
    <g>
      <path d="M2 2.500h12v14H2z" fill="#fce94f" stroke="#c4a000" />
      <Lens cx={15} cy={9} fill="#f1ecc8" />
    </g>
  ),
  zoomLayer: (
    <g>
      <path d="M2 2.500h12v14H2z" fill="#eee" stroke="#999" />
      <Lens cx={15} cy={9} />
    </g>
  ),
  zoomLast: (
    <g>
      <Lens />
      <rect x="13.500" y="13.500" width="10.500" height="10" fill="#5b85b5" />
      <path d="M21.500 15.500l-5 3 5 3" stroke="#fff" strokeWidth="2" />
    </g>
  ),
  zoomNext: (
    <g>
      <Lens grey />
      <rect x="13.500" y="13.500" width="10.500" height="10" fill="#aaa" />
      <path d="M16.500 15.500l5 3-5 3" stroke="#fff" strokeWidth="2" />
    </g>
  ),
  bookmarkNew: (
    <g transform="translate(.8 0)">
      <path d="M5.500 1.500h15v19H2V2.500a1 1 0 011-1h2.500v17H2" fill="#e6e6e6" stroke="#888" />
      <path d="M12.500 1h4v7.500l-2 2.500-2-2.500z" fill="#6d97c4" stroke="#2f4f75" />
      <Star x={13} y={13.500} />
    </g>
  ),
  bookmarks: (
    <g transform="translate(.8 0)">
      <path d="M5.500 1.500h15v20H2V2.500a1 1 0 011-1h2.500v18H2" fill="#e6e6e6" stroke="#888" />
      <path d="M12.500 1h4v7.500l-2 2.500-2-2.500z" fill="#6d97c4" stroke="#2f4f75" />
    </g>
  ),
  refresh: (
    <g fill="#5a8fc7" stroke="#3c6ea5" strokeWidth=".8">
      <path d="M2 10C2.500 4 8 .8 13.500 1.500c2 .3 3.500 1 4.800 2L21 1.200 22 10h-9l2.500-2.800C12 4.500 7 5.500 5.500 9.500z" />
      <path d="M22 13c-.5 6-6 9.200-11.500 8.500-2-.3-3.500-1-4.800-2L3 22 2 13h9l-2.500 2.800c3.500 2.700 8.500 1.700 10-2.300z" />
    </g>
  ),
  identify: (
    <g>
      <circle cx="9" cy="9" r="8.500" fill="#5a8fc7" stroke="#8fb3dc" />
      <text x="6.500" y="14" fontSize="14" fontWeight="700" fontStyle="italic" fontFamily="'Liberation Serif',serif" fill="#fff">i</text>
      <Cursor />
    </g>
  ),
  action: (
    <g>
      <circle cx="10" cy="10" r="8.700" stroke="#aaa" strokeWidth="2.200" strokeDasharray="3.600 1.800" />
      <circle cx="10" cy="10" r="7.800" fill="#ddd" stroke="#aaa" />
      <circle cx="10" cy="10" r="5.200" fill="#999" />
      <path d="M8.300 7.200l5 2.800-5 2.800z" fill="#eee" />
      <Cursor stroke="#999" />
    </g>
  ),
  select: (
    <g>
      <rect x="1.500" y="1.500" width="21" height="19" stroke="#777" strokeDasharray="2.500 1" />
      <rect x="2.500" y="2.500" width="12" height="12" fill="#d9d9d9" stroke="#bbb" />
      <path d="M10 8.500l2.800 10.500 2.300-2.300 5 5.500 2.300-2.300-5-5.300 3.200-1.300z" fill="#fff" stroke="#888" />
    </g>
  ),
  expr: (
    <g>
      <rect x="7.500" y="8.500" width="13" height="12.500" fill="#dedede" stroke="#aaa" />
      <path d="M11.500 4.500C10.800 1.800 4 1.200 3.600 4.900c-.2 2.100 1.900 2.900 4.400 2.800-3.600 0-5.700 1.400-5.200 3.800.7 3.500 7.700 3.200 9.500.2" stroke="#8c8c8c" strokeWidth="2" />
    </g>
  ),
  deselect: (
    <g>
      <rect x="2" y="2.500" width="13" height="12.500" fill="#fce94f" stroke="#c4a000" />
      <rect x="13" y="13.500" width="10.500" height="10" rx="1.500" fill="#e03030" />
      <circle cx="18.200" cy="18.500" r="3.400" stroke="#fff" strokeWidth="1.400" />
      <path d="M20.500 16.200L16 20.800" stroke="#fff" strokeWidth="1.400" />
    </g>
  ),
  table: (
    <g>
      <rect x="2.500" y="2.500" width="19" height="19" fill="#ededed" stroke="#b0b0b0" />
      <path d="M5 5h7M14 5h6" stroke="#aaa" strokeWidth="2" />
      <path d="M3 8h18" stroke="#bbb" />
      <path d="M5 11h5M12 11h8M5 14h5M12 14h8M5 17h5M12 17h8M5 20h5M12 20h8" stroke="#b0b0b0" strokeWidth="1.200" />
    </g>
  ),
  abacus: (
    <g stroke="#9a9a9a">
      <path d="M2.500 1v21M21.500 1v21M2.500 5h19M2.500 11h19M2.500 17h19" />
      <path d="M1 21.500h22v1.500H1z" fill="#ccc" />
      <g fill="#e4e4e4">
        <circle cx="9" cy="5" r="2" /><circle cx="17" cy="5" r="2" />
        <circle cx="7" cy="11" r="2" /><circle cx="12" cy="11" r="2" />
        <circle cx="7" cy="17" r="2" /><circle cx="12" cy="17" r="2" /><circle cx="17" cy="17" r="2" />
      </g>
    </g>
  ),
  sigma: (
    <path d="M4 2.500h14.500l.5 5h-1.500c-.6-2-1.500-2.600-3.500-2.600H9.500l5.300 6.600-6 7.500H15c2.500 0 3.300-.8 4-2.800h1.300L19.300 21H4v-1l7-8.300L4 3.500z" fill="#a50fa5" stroke="#7c0a7c" strokeWidth=".5" />
  ),
  measure: (
    <g>
      <path d="M2 6.500h19M2 4v5M21 4v5" stroke="#415a75" strokeWidth="1.500" />
      <rect x="1.500" y="12" width="21" height="7.500" fill="#c8ccc8" stroke="#555" />
      <path d="M5 12v3M8 12v4M11 12v3M14 12v4M17 12v3M20 12v3" stroke="#555" />
    </g>
  ),
  tip: (
    <g>
      <circle cx="6" cy="19" r="4" fill="#7fb27f" stroke="#4c7a4c" />
      <path d="M5 1.500h14a4 4 0 014 4v3a4 4 0 01-4 4h-4.500l-4 6.500v-6.500H5a4 4 0 01-4-4v-3a4 4 0 014-4z" fill="#fbf3a0" stroke="#d1ab14" strokeWidth="1.300" />
    </g>
  ),
  annot: (
    <g>
      <path d="M1.500 1.500h21v15H8l-6 5.500 2.500-5.500h-3z" fill="#edf2f6" stroke="#999" />
      <text x="7" y="13.500" fontSize="14" fontWeight="700" fontFamily="'Liberation Serif',serif" fill="#444" textLength="10.500" lengthAdjust="spacingAndGlyphs">T</text>
    </g>
  ),
  help: (
    <g>
      <rect x="2" y="1.500" width="20.500" height="21" fill="#6d97c4" stroke="#333" />
      <rect x="2.500" y="2" width="5" height="20" fill="#2d3e50" />
      <text x="11.500" y="16" fontSize="14" fontFamily="'Liberation Serif',serif" fill="#fff">?</text>
    </g>
  ),
  pencils: (
    <g fill="#aaa" stroke="#8a8a8a" strokeWidth=".9">
      <path d="M2 17L9 3l3 2-7 14-3 3z" />
      <path d="M7 18L14 3l3 2-7 14-3 3.500z" />
      <path d="M12 17L18 3l4 2-7 14-4 4z" fill="#999" />
      <path d="M2 22.500l-.5-5.500 2.800 1.500zM6.500 23.500l.2-5 2.800 1.300z" fill="#8a8a8a" />
    </g>
  ),
  pencil: (
    <g stroke="#aaa">
      <path d="M5 17.500L15.500 2l4 2.500L9 20l-4.500 3z" fill="#e4e4e4" />
      <path d="M4.500 23l.3-2.700 1.700 1.200zM7 18L17.500 3" fill="#aaa" />
    </g>
  ),
  saveEdits: (
    <g>
      <Disk grey x={1} />
      <path d="M14 20l6.500-9 3 2-6.500 9-4 2z" fill="#bbb" stroke="#888" strokeWidth=".8" />
    </g>
  ),
  addFeat: (
    <g transform="translate(.6 0)">
      <g fill="#bbb" stroke="#999">
        <circle cx="4" cy="11" r="2.500" /><circle cx="11.500" cy="3.500" r="2.500" /><circle cx="20" cy="5.500" r="2.500" />
      </g>
      <Star fill="#aaa" />
    </g>
  ),
  curve: (
    <g transform="translate(2 0)">
      <path d="M2.500 19c0-8 3-13 15-15.500" stroke="#aaa" strokeWidth="1.500" />
      <g fill="#eee" stroke="#999"><rect x="1" y="17.500" width="3.500" height="3.500" /><rect x="4" y="5.500" width="3.500" height="3.500" /><rect x="15.500" y="1.500" width="3.500" height="3.500" /></g>
      <Star x={12} fill="#aaa" />
    </g>
  ),
  moveFeat: (
    <g>
      <g fill="#bbb" stroke="#999">
        <circle cx="4" cy="11" r="2.500" /><circle cx="11.500" cy="3.500" r="2.500" /><circle cx="20" cy="5.500" r="2.500" />
      </g>
      <rect x="13.500" y="13.500" width="10.500" height="10.500" rx="1.500" fill="#8a8a8a" />
      <path d="M15 17.500h4v-2.500l4 3.800-4 3.700v-2.500h-4z" fill="#fff" />
    </g>
  ),
  node: (
    <g>
      <path d="M3 20L8 6M10 4.500h13" stroke="#bbb" strokeWidth="1.800" />
      <rect x="6" y="2" width="5" height="5" fill="#eee" stroke="#999" strokeWidth="1.400" />
      <path d="M10 20L22 9M13 11.500l9.500 9.500" stroke="#aaa" strokeWidth="3.400" />
      <path d="M10 20L22 9M14 12l8 8" stroke="#ddd" strokeWidth="1.200" />
    </g>
  ),
  trash: (
    <g stroke="#777">
      <path d="M4.500 7.500h15v15h-15z" fill="#ccc" />
      <path d="M3 4.500h18M8 4V1.500h8V4" strokeWidth="1.700" />
      <path d="M8 9v12M12 9v12M16 9v12" strokeWidth="1.500" />
    </g>
  ),
  cut: (
    <g stroke="#999" strokeWidth="1.500">
      <path d="M1 7l15 7.500M3 16.500L17 9" strokeWidth="2" />
      <ellipse cx="19.500" cy="7.500" rx="3" ry="2.500" transform="rotate(-35 19.500 7.500)" />
      <ellipse cx="19" cy="16" rx="3" ry="2.500" transform="rotate(35 19 16)" />
    </g>
  ),
  copy: (
    <g>
      <g opacity=".6"><Page x={7} y={1} w={14} h={15} s="#999" /></g>
      <Page x={3} y={5} w={14} h={16} s="#999" />
      <path d="M6 11h6M6 13.500h8M6 16h8M6 18.500h8" stroke="#aaa" />
    </g>
  ),
  paste: (
    <g>
      <rect x="4" y="2.500" width="16" height="20" fill="#d8d8d8" stroke="#999" />
      <rect x="6" y="5" width="12" height="15" fill="#f4f4f4" stroke="#aaa" strokeWidth=".8" />
      <rect x="8" y="1" width="8" height="4" rx="1" fill="#ddd" stroke="#888" />
      <path d="M8 8.500h8M8 11h8M8 13.500h8M8 16h6" stroke="#aaa" />
    </g>
  ),
  abc: <Tag />,
  pie: (
    <g stroke="#999">
      <circle cx="12" cy="12" r="11" fill="#dcdcdc" />
      <path d="M12 12L4.500 3.800A11 11 0 0119.500 3.800z" fill="#8c8c8c" />
      <path d="M12 12v11M12 12L3.800 4M12 12l8.200-8" stroke="#999" strokeWidth="4" />
      <path d="M12 12v11M12 12L3.800 4M12 12l8.200-8" stroke="#f2f2f2" strokeWidth="2" />
      <circle cx="12" cy="12" r="11" />
    </g>
  ),
  abPinned: (
    <g>
      <rect x=".5" y="2.500" width="23" height="19" fill="#e9edf3" stroke="#1a72e8" strokeWidth="1.300" />
      <Tag yellow text="ab" />
      <path d="M17.500 9v8" stroke="#fff" strokeWidth="3" />
      <path d="M17.500 8v9" stroke="#999" />
      <circle cx="18.500" cy="18" r="4.800" fill="#a8201f" stroke="#7c1414" strokeWidth=".6" />
    </g>
  ),
  abPin: (
    <Tag text="ab">
      <path d="M18 8v9" stroke="#eee" strokeWidth="3" />
      <circle cx="18.500" cy="18" r="4.800" fill="#929292" />
    </Tag>
  ),
  abEye: (
    <Tag>
      <path d="M8.500 19c4-5 10.500-5 15 0-4.500 4.500-11 4.500-15 0z" fill="#eee" stroke="#888" />
      <circle cx="16" cy="18.700" r="2.800" fill="#888" />
    </Tag>
  ),
  abMove: (
    <Tag>
      <rect x="13" y="13.500" width="10.500" height="10" rx="1.500" fill="#8a8a8a" />
      <path d="M14.500 17.300h4v-2.300l4 3.500-4 3.500v-2.300h-4z" fill="#fff" />
    </Tag>
  ),
  abRot: (
    <Tag>
      <rect x="13" y="13.500" width="10.500" height="10" rx="1.500" fill="#a2a2a2" />
      <path d="M16 21a3.200 3.200 0 115-1" stroke="#fff" strokeWidth="1.700" />
      <path d="M16.500 22.500v-4l3.500 3z" fill="#fff" />
    </Tag>
  ),
  abEdit: (
    <Tag>
      <rect x="13" y="13.500" width="10.500" height="10" rx="1.500" fill="#b2b2b2" />
      <path d="M15 22l5-6 1.500 1.300-5 5z" fill="#fff" />
    </Tag>
  ),
  csw: (
    <g>
      <path d="M1.500 5.500v16h10v-1.500" stroke="#bbb" strokeWidth="1.500" />
      <rect x="2.500" y="1.500" width="21" height="18" fill="#fff" stroke="#c8c8c8" strokeWidth="1.300" />
      <text x="4" y="13" fontSize="9" fontWeight="700" fontFamily="'Noto Sans',sans-serif" fill="#444" textLength="18" lengthAdjust="spacingAndGlyphs">CSW</text>
    </g>
  ),
  python: (
    <g>
      <path d="M10.500 1c-4 0-5 1.500-5 3.500V7h5.500v1H3.500C1.500 8 .8 10 .8 12s.7 4 2.700 4h2v-3c0-2 1.500-3 3-3h5c1.500 0 2.500-1 2.500-2.500v-3C16 2 14.500 1 10.500 1z" fill="#3a75a8" />
      <path d="M12 23c4 0 5-1.500 5-3.500V17h-5.500v-1H19c2.500 0 3.700-2 3.700-4.500S21 8 19 8h-1.500v3c0 2-1.500 3-3 3h-5c-1.500 0-2.500 1-2.500 2.500v3C7 22 8.500 23 12 23z" fill="#ffd94a" />
      <circle cx="8" cy="4" r="1" fill="#fff" />
      <path d="M16.500 15.500l6 3-6 3" stroke="#555" strokeWidth="1.500" />
    </g>
  ),
  stack: (
    <g stroke="#000" strokeWidth="1.700">
      <path d="M2 19.500c4 0 3-3.500 6-3.500l13 .5c-2 1.500-1 3.500-3 5.500H6c-2 0-3-1-4-2.500z" fill="#1fd11f" />
      <path d="M2 13c4 0 3-4 6-4l13 .5c-3 1.500-1.500 4-4 5.500H6c-2 0-3-1-4-2z" fill="#f0ef2c" />
      <path d="M2 7c4 0 3-4 6-4l13 .5c-3 1.500-1.500 3.500-4 5H6C4 8.500 3 8 2 7z" fill="#1fb2cf" />
      <path d="M13 0v4M12 9v3M11.500 21v3.500" stroke="#e02020" strokeWidth="1.600" />
    </g>
  ),
  vAdd: <g><Vee /><Plus /></g>,
  rAdd: (
    <g>
      <path d="M0 1h20v19H0z" fill="#5f8fc4" />
      <path d="M0 1h6.600v6.300H0zM13.300 1H20v6.300h-6.700zM6.600 7.300h6.700v6.400H6.600zM0 13.700h6.600V20H0z" fill="#25405f" />
      <path d="M6.600 1h6.700v6.300H6.600z" fill="#82aad6" />
      <Plus />
    </g>
  ),
  feather: (
    <g>
      <path d="M.8 23C2 17 4 11 9 7s9-4.500 14-6.500c0 4-1 8-5.500 11S9 15 4.500 18z" fill="#8fb1d8" stroke="#2d4a6b" />
      <path d="M.8 23C6 14 13 8 22.500.8M6 13l6-.8M10 9.500l7-1" stroke="#2d4a6b" />
      <Plus />
    </g>
  ),
  elephant: (
    <g>
      <path d="M1 4c0-3 4-4 7-2.500C10 .5 13 .5 15 1.500c3-1 4.500 0 4.500 3 0 3-1.500 6-3 8L13.500 11.500V17c0 2-4.500 2-5 0L8 11.500C7.500 13.500 5.500 14 4.500 12.500 2.500 10 1 7 1 4z" fill="#5b85b5" stroke="#2d4a6b" />
      <path d="M6 3c-1 4 0 7 2 8.500M15.500 3c1 4 0 7-2 8.500M8.500 8h1M12.500 8h1" stroke="#2d4a6b" />
      <Plus />
    </g>
  ),
  globeA: (
    <g>
      <ellipse cx="12" cy="11" rx="11.500" ry="10.500" fill="#a9c3e0" stroke="#6b8db5" />
      <path d="M3 6l4-2 3 .5-1 2.500-3 2-2 .5zM13 3l6 2 2 3-3 1.500-3-2-2-1zM7 12l3.500 1 1 3-3 3-1.500-4zM15 12l4 1-2 4-2-1z" fill="#415a75" />
      <path d="M1 8h22M1 14h22M8 1v20M16 1v20" stroke="#c5d6ea" strokeWidth=".5" />
      <Plus />
    </g>
  ),
  globeB: (
    <g>
      <ellipse cx="12" cy="11" rx="11.500" ry="10.500" fill="#5b85b5" stroke="#25405f" />
      <path d="M1 8h22v6H1z" fill="#25405f" />
      <path d="M8 8h8v6H8z" fill="#5b85b5" />
      <path d="M9 1h6v6H9zM9 15h6v5H9z" fill="#25405f" />
      <path d="M2 7.500h20M1 14.500h22" stroke="#dfe8f2" />
      <ellipse cx="12" cy="11" rx="5" ry="10.500" stroke="#dfe8f2" />
      <Plus />
    </g>
  ),
  globeV: (
    <g>
      <ellipse cx="12" cy="11" rx="11.500" ry="10.500" fill="#f2f6fb" stroke="#5f8fc4" strokeWidth="1.300" />
      <path d="M2 6.500h20M1 15h22" stroke="#a9c3e0" />
      <ellipse cx="12" cy="11" rx="6" ry="10.500" stroke="#a9c3e0" />
      <g transform="translate(4 3) scale(.68)"><Vee color="#222" thin={1.8} /></g>
      <Plus />
    </g>
  ),
  comma: (
    <g>
      <path d="M5 7c0-3 2.300-5 5-5 3 0 5.200 2.200 5.200 6 0 5-3.200 8.500-8.400 10.500L6 17c3-1.500 4.500-3 4.700-5.500C7.500 12.500 5 10.500 5 7z" fill="#5f8fc4" stroke="#2d4a6b" />
      <Plus />
    </g>
  ),
  vBox: (
    <g>
      <rect x="1.500" y="1.500" width="21" height="21" rx="1.500" fill="#b8cbe0" stroke="#7a94b0" />
      <Vee />
      <Plus />
    </g>
  ),
  vNew: <g><Vee dy={-1} /><Star x={14} y={13.500} /></g>,
};

/* ----------------------------------------------------------------- parts */

const Down = ({ c = "#777", w = 8 }) => (
  <svg width={w} height={w} viewBox="0 0 8 8" className="block shrink-0">
    <path d="M.5 1h7L4 7.500z" fill={c} stroke={c} strokeWidth=".6" />
  </svg>
);

const Grip = ({ width }) => (
  <div className={"flex flex-col items-center justify-center gap-[2px] " + width}>
    <i className="block h-px w-1 bg-[#b9b9b9]" />
    <i className="block h-px w-1 bg-[#b9b9b9]" />
    <i className="block h-px w-1 bg-[#b9b9b9]" />
  </div>
);
const GripH = () => (
  <div className="flex h-[4px] gap-[2px]">
    <i className="block w-px bg-[#b9b9b9]" />
    <i className="block w-px bg-[#b9b9b9]" />
    <i className="block w-px bg-[#b9b9b9]" />
  </div>
);
const Tool = ({ name, width = "w-9" }) => (
  <div className={"flex items-center justify-center " + width}>
    <Svg>{I[name]}</Svg>
  </div>
);
const Drop = ({ c }) => (
  <div className="flex w-5 items-center justify-center">
    <Down c={c} />
  </div>
);

const MENUS = [
  ["w-[77.5px]", "Pro", "y", "ecto"],
  ["w-[64.5px]", "", "E", "dición"],
  ["w-[41px]", "", "V", "er"],
  ["w-[52px]", "", "C", "apa"],
  ["w-[107.5px]", "Conf", "i", "guración"],
  ["w-[116px]", "Co", "m", "plementos"],
  ["w-[77px]", "Vect", "o", "rial"],
  ["w-[62px]", "", "R", "áster"],
  ["w-[110px]", "Base de ", "d", "atos"],
  ["w-[49px]", "", "W", "eb"],
  ["w-[46px]", "SCP", "", ""],
  ["w-[78px]", "Pro", "c", "esos"],
  ["w-[60px]", "A", "y", "uda"],
];

const LEGEND = [
  ["bg-[#d7191c]", "<= 1.8"],
  ["bg-[#fdae61]", "1.8 - 2.6"],
  ["bg-[#ffffc0]", "2.6 - 3.4"],
  ["bg-[#a6d96a]", "3.4 - 4.2"],
  ["bg-[#1a9641]", "> 4.2"],
];

const SIDE = [
  ["vAdd"], ["rAdd"], ["feather"], ["elephant", true], ["globeA", true],
  ["globeB"], ["globeV", true], ["comma"], ["vBox"], ["vNew", true],
];

function TopBar() {
  return (
    <div className="grid h-[27px] shrink-0 grid-cols-3 items-center border-b border-[#13222e] bg-[#242e3a] text-[12px] font-bold text-white">
      <div className="flex items-center">
        <div className="ml-[17px] flex w-[49px] gap-1">
          <i className="block size-[2px] bg-white" />
          <i className="block size-[2px] bg-white" />
          <i className="block size-[2px] bg-white" />
        </div>
        <span className="tracking-[-0.3px]">Qgis.bin</span>
      </div>
      <div className="pr-px text-center tracking-[-0.1px]">lun 11:26</div>
      <div className="flex items-center justify-end pr-[18px]">
        <span className="mr-[26px] font-semibold">en</span>
        <svg width="16" height="14" viewBox="0 0 16 14" className="mr-[9px]">
          <path fillRule="evenodd" d="M1 0h14a1 1 0 011 1v12a1 1 0 01-1 1H1a1 1 0 01-1-1V1a1 1 0 011-1zm1 2v5h1v2h2v2h6V9h2V7h1V2z" fill="#fff" />
        </svg>
        <svg width="17" height="14" viewBox="0 0 17 14" className="mr-[11px]" fill="none">
          <path d="M0 5h2.500L6 1.500v11L2.500 9H0z" fill="#fff" />
          <path d="M8 4.500q1.500 2.500 0 5M10.500 3q3 4 0 8" stroke="#fff" strokeWidth="1.600" />
          <path d="M13 1.500q4 5.500 0 11" stroke="#7b828c" strokeWidth="1.600" />
        </svg>
        <svg width="13" height="16" viewBox="0 0 13 16" fill="none">
          <path d="M0 2h3V0h7v2h3v14H0z" fill="#fff" />
          <path d="M2.500 8.500l3 3 5-5.500" stroke="#242e3a" strokeWidth="2" />
        </svg>
      </div>
    </div>
  );
}

function TitleAndMenu() {
  return (
    <div className="flex h-[52px] shrink-0 flex-col bg-[#444444] text-[#d8d8d8]">
      <div className="grid h-[25px] grid-cols-3 items-center">
        <span />
        <span className="pb-[2px] text-center text-[14px] font-bold">QGIS 2.18.4</span>
        <svg width="8" height="8" viewBox="0 0 8 8" className="mr-[9px] -mt-[1px] justify-self-end">
          <path d="M.8.8l6.400 6.400M7.200.8L.8 7.200" stroke="#e4e4e4" strokeWidth="2" />
        </svg>
      </div>
      <div className="flex h-[27px] items-center pl-[12.5px] text-[13.6px] text-[#d3d3cf]">
        {MENUS.map(([w, a, u, b]) => (
          <span key={a + u + b} className={"shrink-0 whitespace-nowrap " + w}>
            {a}
            <span className="underline decoration-1 underline-offset-[4px] [text-decoration-skip-ink:none]">{u}</span>
            {b}
          </span>
        ))}
      </div>
    </div>
  );
}

function Toolbars() {
  return (
    <div className="flex h-20 shrink-0 flex-col">
      <div className="flex h-10">
        <Grip width="w-[11px]" />
        {["newDoc", "open", "save", "saveAs", "composer", "manager"].map((n) => <Tool key={n} name={n} />)}
        <Grip width="w-[13px]" />
        <div className="flex w-9 items-center justify-center">
          <div className="flex h-[34px] w-[34px] shrink-0 items-center justify-center rounded-[3px] border border-[#a9a9a9] bg-[#dedede]">
            <Svg>{I.hand}</Svg>
          </div>
        </div>
        {["panSel", "zoomIn", "zoomOut", "zoomOne", "zoomFull", "zoomSel", "zoomLayer", "zoomLast", "zoomNext", "bookmarkNew", "bookmarks", "refresh"].map((n) => (
          <Tool key={n} name={n} />
        ))}
        <Grip width="w-[14px]" />
        <Tool name="identify" />
        <Tool name="action" />
        <Drop c="#b0b0b0" />
        <Tool name="select" />
        <Drop c="#b0b0b0" />
        <Tool name="expr" />
        <Drop c="#b0b0b0" />
        {["deselect", "table", "abacus", "sigma", "measure"].map((n) => <Tool key={n} name={n} />)}
        <Drop />
        <Tool name="tip" />
        <Tool name="annot" />
        <Drop />
        <Grip width="w-3" />
        <Tool name="help" />
      </div>
      <div className="flex h-10">
        <Grip width="w-[11px]" />
        <div className="flex w-[41px] items-center pl-[5px]">
          <Svg>{I.pencils}</Svg>
          <Down c="#aaa" />
        </div>
        {["pencil", "saveEdits", "addFeat"].map((n) => <Tool key={n} name={n} />)}
        <Tool name="curve" width="w-[37px]" />
        <Drop c="#b0b0b0" />
        {["moveFeat", "node", "trash", "cut", "copy", "paste"].map((n) => <Tool key={n} name={n} />)}
        <Grip width="w-[13px]" />
        {["abc", "pie", "abPinned", "abPin", "abEye", "abMove", "abRot", "abEdit"].map((n) => <Tool key={n} name={n} />)}
        <Grip width="w-[13px]" />
        <Tool name="csw" />
        <Grip width="w-[14px]" />
        <Tool name="python" />
        <Tool name="stack" width="w-[38px]" />
      </div>
    </div>
  );
}

function SideBar() {
  return (
    <div className="flex w-[60px] shrink-0 flex-col">
      <div className="flex h-[11px] items-center pl-[26px]">
        <GripH />
      </div>
      {SIDE.map(([n, d]) => (
        <div key={n} className="flex h-9 shrink-0 items-center pl-2">
          <Svg>{I[n]}</Svg>
          {d && <span className="ml-[12.5px]"><Down c="#858585" w={8} /></span>}
        </div>
      ))}
      <div className="mt-[71px] pl-[26px]">
        <GripH />
      </div>
    </div>
  );
}

function PanelTools() {
  return (
    <div className="flex h-[33px] shrink-0 items-center pt-px">
      <svg width="16" height="16" viewBox="0 0 16 16" className="ml-2" fill="none">
        <path d="M15 1l-6 6" stroke="#b5651d" strokeWidth="2.400" />
        <path d="M4 5.500l3 .5 5 4-1 4-5 1z" fill="#e8a33c" />
        <path d="M0 6l6 1 1 4-3 3z" fill="#e65045" />
        <path d="M3 8l3 4M5 7l4 5" stroke="#f6d44b" />
      </svg>
      <svg width="16" height="16" viewBox="0 0 16 16" className="ml-[12px]" fill="none" stroke="#888">
        <path d="M.5 5.500v8h8M3.500 3.500v8h8" />
        <path d="M6.500 2.500h6v7h-6z" fill="#eee" />
        <path d="M8 10V2a1.300 1.300 0 012.600 0v6" stroke="#2d4a6b" />
        <rect x="9" y="10" width="6" height="6" rx="1" fill="#5a8c5a" stroke="none" />
        <path d="M12 11v4M10 13h4" stroke="#fff" />
      </svg>
      <svg width="16" height="14" viewBox="0 0 16 14" className="ml-[11px]" fill="none">
        <path d="M.5 7.500C4 2.500 11 2.500 15 7.500c-4 4-11 4-14.500 0z" fill="#fff" stroke="#999" />
        <path d="M1 4.500C5 .8 11 1 14.500 4" stroke="#aaa" />
        <circle cx="7.800" cy="7" r="3.300" fill="#6d97c4" />
        <circle cx="7.800" cy="7" r="1.600" fill="#222" />
      </svg>
      <span className="pt-[3px]"><Down c="#777" w={8} /></span>
      <svg width="14" height="16" viewBox="0 0 14 16" className="ml-[12px]">
        <path d="M.5 1.500h13L8.700 8v7l-3.400-2V8z" fill="#5f8fc4" stroke="#3c6ea5" strokeWidth=".8" />
        <path d="M.5.8h13v2.500H.5z" fill="#f3dd3f" stroke="#c4a000" strokeWidth=".6" />
      </svg>
      <svg width="16" height="16" viewBox="0 0 16 16" className="ml-[14px]" fill="none">
        <path d="M7.500 2.600C7 .8 2.200.5 2 3c-.1 1.400 1.200 2 3 2-2.500 0-3.900 1-3.600 2.500.5 2.400 5.300 2.100 6.500.2" stroke="#999" strokeWidth="1.500" />
        <path d="M7 8.500h7l-.5 6.500h-2v-4h-2v4h-2z" fill="#ccc" stroke="#bbb" />
      </svg>
      <span className="ml-[12px]"><Down c="#b5b5b5" w={7} /></span>
      <svg width="15" height="15" viewBox="0 0 15 15" className="ml-[13px]" fill="none">
        <path d="M1 1.500h8M1.500 1.500V13H4M1.500 6H4" stroke="#666" />
        <path d="M3 4.500h4v3H3zM3 10.500h4v3H3z" fill="#f59a1b" />
        <path d="M8.500 1h3v7.500H14l-4 5-4-5h2.500z" fill="#5f8fc4" stroke="#25405f" strokeWidth=".9" />
      </svg>
      <svg width="9" height="7" viewBox="0 0 9 7" className="ml-auto mr-[2px]" fill="none" stroke="#111" strokeWidth="1.700">
        <path d="M.8.800L3.300 3.500.8 6.200M4.900.8l2.500 2.700-2.500 2.700" />
      </svg>
    </div>
  );
}

function LayerPanel() {
  return (
    <div className="flex w-[230px] shrink-0 flex-col">
      <div className="flex h-[24px] shrink-0 items-center pl-[2px] text-[13.7px] text-[#5a5a5a]">
        Panel de capas
        <svg width="28" height="11" viewBox="0 0 28 11" className="ml-auto mr-[3px]" fill="none" stroke="#666">
          <rect x=".5" y=".5" width="10" height="10" rx="1.500" />
          <path d="M5 2.500h3.500V6H5zM2.500 5v3.500H6V6" />
          <rect x="17.500" y=".5" width="10" height="10" rx="1.500" />
          <path d="M20 3l5 5M25 3l-5 5" strokeWidth="2.200" />
        </svg>
      </div>
      <PanelTools />
      <div className="flex min-h-0 flex-1 flex-col border border-b-2 border-[#aeb0ae] bg-white text-[14px] text-[#3a3a3a]">
        <div className="flex h-[22px] shrink-0 items-center bg-[#f2564e]">
          <svg width="10" height="9" viewBox="0 0 10 9" className="ml-[7px]">
            <path d="M.5.500h9L5 8.500z" fill="#6b2420" stroke="#51201c" />
          </svg>
          <svg width="14" height="14" viewBox="0 0 14 14" className="ml-[9px]" fill="none">
            <rect width="14" height="14" rx="2" fill="#fff" />
            <path d="M3 7l3.200 3.500L11.500 4.500" stroke="#ee4d45" strokeWidth="2" />
          </svg>
          <svg width="16" height="16" viewBox="0 0 15 15" className="ml-[9px]">
            <path d="M0 0h15v15H0z" fill="#8f7d9b" />
            <path d="M0 0h5v5H0zM10 0h5v5h-5zM5 5h5v5H5zM0 10h5v5H0z" fill="#6d4249" />
            <path d="M10 10h5v5h-5z" fill="#ee554e" />
          </svg>
          <span className="ml-[3px] flex h-[22px] flex-1 items-center border border-dotted border-[#9c7a75] pl-[2px] text-[13.700px] font-bold text-white">
            <span className="border-b border-white leading-[17px]">kmeans2016</span>
          </span>
        </div>
        {LEGEND.map(([c, label]) => (
          <div key={label} className="flex h-[22px] shrink-0 items-center pl-[43px]">
            <i className={"block size-4 " + c} />
            <span className="ml-[6px] text-[14.2px] tracking-[0.1px]">{label}</span>
          </div>
        ))}
      </div>
      <div className="flex h-[33px] shrink-0 items-start text-[13.6px] text-[#5a5a5a]">
        <div className="flex h-[32px] w-[95px] items-center rounded-b-[3px] border border-t-0 border-[#b9bab9] bg-white pl-2 pt-px">Panel de c...</div>
        <div className="flex h-[29px] flex-1 items-center rounded-br-[3px] border border-l-0 border-t-0 border-[#c6c6c6] bg-[#dcdcdc] pl-[10px] pt-[2px]">Panel del explor...</div>
      </div>
    </div>
  );
}

const Spin = ({ children }) => (
  <div className="flex h-[28px] w-[86px] rounded-[3px] border border-[#a9aaa9] bg-white text-[14px] text-[#3a3a3a]">
    <span className="flex flex-1 items-center pl-[5px]">{children}</span>
    <span className="flex w-[14px] flex-col items-center justify-between border-l border-[#d0d0d0] bg-[#f6f6f6] py-[4px]">
      <span className="rotate-180"><Down w={5} /></span>
      <Down w={5} />
    </span>
  </div>
);

function StatusBar() {
  return (
    <div className="flex h-[37px] shrink-0 items-center border-t border-[#c9cac9] text-[13.5px] text-[#5a5a5a]">
      <i className="block h-full w-[3px] bg-[#2b2f3a]" />
      <span className="w-[752px] pl-[3px]">Preparado</span>
      <span className="w-[83px]">Coordenada</span>
      <div className="flex h-[28px] w-[209px] items-center justify-center rounded-[3px] border border-[#a9aaa9] bg-white text-[14.2px] tracking-[0.15px] text-[#3a3a3a]">755359,7154944</div>
      <svg width="24" height="26" viewBox="0 0 24 26" className="ml-[4px] w-6" fill="none">
        <ellipse cx="16" cy="18" rx="7" ry="6.500" fill="#cbb6ba" />
        <path d="M3 4c2-4 7-4 9 0l4 8-5 5-6-3C2 11 1 8 3 4z" fill="#fff" stroke="#000" strokeWidth="2" />
        <path d="M7 2l3 13M11 4l2 11M4 8l7 7M2 16l5 1M3 20l5-2M17 5l-3 5M15 4l4-3M18 6l3-1" stroke="#000" strokeWidth="1.600" />
        <circle cx="13.500" cy="18.500" r="5.500" fill="#fff" stroke="#000" strokeWidth="2.200" />
        <circle cx="13" cy="19" r="1.700" fill="#000" />
      </svg>
      <span className="ml-[13px] w-[45px]">Escala</span>
      <div className="flex h-[28px] w-[114px] rounded-[3px] border border-[#a9aaa9] bg-white text-[#3a3a3a]">
        <span className="flex w-[89px] items-center border-r border-[#b9b9b9] pl-[5px] text-[14.300px] tracking-[0.15px]">1:325.608</span>
        <span className="flex flex-1 items-center justify-center"><Down w={8} c="#858585" /></span>
      </div>
      <svg width="18" height="25" viewBox="0 0 18 25" className="ml-[7px]" fill="none">
        <path d="M3.500 13V6.500a5.500 5.500 0 0111 0V13" stroke="#999" strokeWidth="3" />
        <path d="M3.500 13V6.500a5.500 5.500 0 0111 0V13" stroke="#ddd" strokeWidth="1" />
        <rect y="12" width="18" height="12.500" rx="1.500" fill="#666" />
      </svg>
      <span className="ml-[16px] w-[86px]">Amplificador</span>
      <Spin>100%</Spin>
      <span className="ml-[10px] w-[67px]">Rotación</span>
      <Spin>0,0</Spin>
      <svg width="16" height="16" viewBox="0 0 16 16" className="ml-[10px]" fill="none">
        <rect x=".5" y="1.500" width="14" height="14" rx="2" fill="#fff" stroke="#aaa" />
        <path d="M3.500 8l3.500 4L14.500 2" stroke="#ee4d45" strokeWidth="2.200" />
      </svg>
      <span className="ml-[6px] w-[97px]">Representar</span>
      <svg width="20" height="20" viewBox="0 0 20 20" fill="none" stroke="#666" strokeWidth="1.300">
        <circle cx="10" cy="10" r="9" strokeWidth="1.800" />
        <ellipse cx="10" cy="10" rx="4.500" ry="9" />
        <path d="M10 0v20M1 7q9-4 18 0M1 13q9 4 18 0M1 10h18" />
      </svg>
      <span className="ml-[5px] w-[105px] text-[14px] tracking-[0.2px]">EPSG:32721</span>
      <svg width="23" height="22" viewBox="0 0 23 22">
        <path d="M8 0h7a8 8 0 018 8.500 8 8 0 01-4 7q.5 3 2.500 6-4-1-6.500-5H8a8 8 0 010-16.500z" fill="#666" />
        <circle cx="6.500" cy="8.500" r="1.700" fill="#eee" /><circle cx="11.500" cy="8.500" r="1.700" fill="#eee" /><circle cx="16.500" cy="8.500" r="1.700" fill="#eee" />
      </svg>
    </div>
  );
}

export default function App() {
  return (
    <div className="flex h-[1080px] w-[1920px] flex-col overflow-hidden bg-[#ededed] font-['Noto_Sans','Open_Sans',sans-serif]">
      <TopBar />
      <TitleAndMenu />
      <Toolbars />
      <div className="flex min-h-0 flex-1">
        <SideBar />
        <LayerPanel />
        <div className="flex w-[6px] shrink-0 items-center justify-center">
          <div className="flex flex-col gap-[2px]">
            <i className="block h-px w-1 bg-[#b9b9b9]" />
            <i className="block h-px w-1 bg-[#b9b9b9]" />
            <i className="block h-px w-1 bg-[#b9b9b9]" />
          </div>
        </div>
        <div className="flex-1 border border-[#a9aaa9] bg-white pl-[491px] pt-[21px]">
          <RasterLayer />
        </div>
      </div>
      <StatusBar />
    </div>
  );
}
